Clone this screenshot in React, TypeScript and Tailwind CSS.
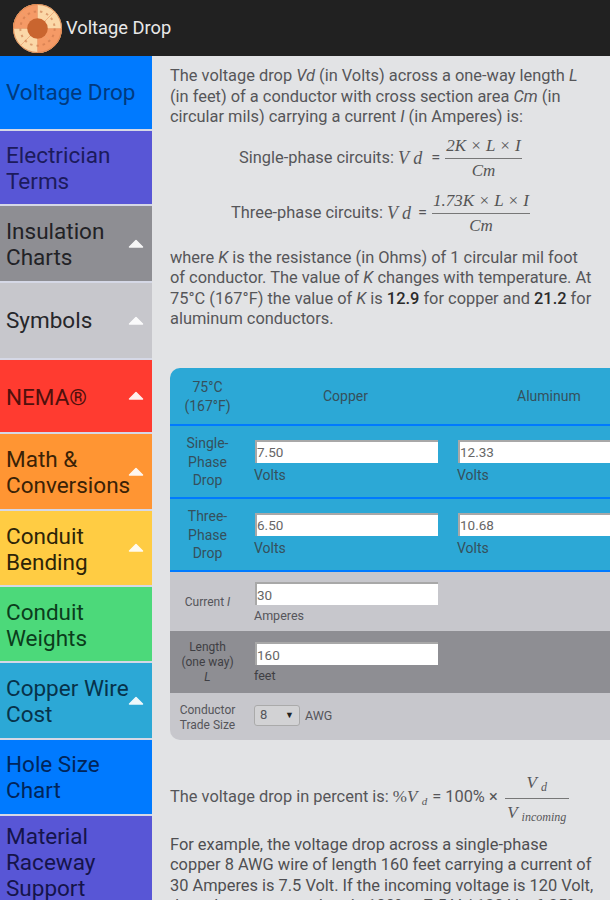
import React from "react";

const menu = [
  { label: ["Voltage Drop"], cls: "h-[73px] pb-[1px] bg-[#007aff] text-[#003a80]" },
  { label: ["Electrician", "Terms"], cls: "h-[73px] bg-[#5856d6] text-[#1c1b5c]" },
  { label: ["Insulation", "Charts"], cls: "h-[75px] bg-[#8e8e93] text-[#222226]", arrow: true },
  { label: ["Symbols"], cls: "h-[75px] pb-[1px] bg-[#c7c7cc] text-[#26262a]", arrow: true },
  { label: ["NEMA®"], cls: "h-[72px] pt-[1px] bg-[#ff3b30] text-[#50100c]", arrow: true },
  { label: ["Math &", "Conversions"], cls: "h-[75px] pt-[1px] bg-[#ff9533] text-[#3a2206]", arrow: true },
  { label: ["Conduit", "Bending"], cls: "h-[74px] pt-[1px] bg-[#ffcc43] text-[#2d2408]", arrow: true },
  { label: ["Conduit", "Weights"], cls: "h-[74px] pt-[1px] bg-[#4cd97a] text-[#0b3d1c]" },
  { label: ["Copper Wire", "Cost"], cls: "h-[75px] bg-[#2ca8d6] text-[#07324a]", arrow: true },
  { label: ["Hole Size", "Chart"], cls: "h-[74px] bg-[#007aff] text-[#00255a]" },
  { label: ["Material", "Raceway", "Support"], cls: "h-[92px] bg-[#5856d6] text-[#15144a]" },
];

function Logo() {
  const spokes = [0, 45, 90, 135, 180, 225, 270, 315];
  return (
    <svg width="49" height="49" viewBox="0 0 50 50" className="shrink-0">
      <circle cx="25" cy="25" r="25" fill="#fbd8a8" />
      <path d="M25 25V0A25 25 0 0 0 0 25Z" fill="#f59a66" />
      <path d="M25 25H50A25 25 0 0 1 25 50Z" fill="#f59a66" />
      {spokes.map((a) => (
        <line key={a} x1="25" y1="25" x2="25" y2="1" stroke="#e9a070" strokeWidth="0.7" transform={`rotate(${a} 25 25)`} />
      ))}
      <circle cx="25" cy="25" r="24.5" fill="none" stroke="#d9854f" strokeWidth="1" />
      <circle cx="25" cy="25" r="17.5" fill="none" stroke="#c9764a" strokeWidth="2" strokeDasharray="2.5 4" opacity="0.6" />
      <circle cx="25" cy="25" r="10.5" fill="#c9652f" />
    </svg>
  );
}

function Arrow() {
  return (
    <svg width="16" height="10" viewBox="0 0 16 10" className="absolute right-[8px] top-1/2 -translate-y-1/2">
      <path d="M8 1.5L14.5 8H1.5Z" fill="#ffffff" stroke="#ffffff" strokeWidth="1.5" strokeLinejoin="round" opacity="0.92" />
    </svg>
  );
}

function Frac({ top, bottom }: { top: React.ReactNode; bottom: React.ReactNode }) {
  return (
    <span className="inline-flex flex-col items-center font-['Liberation_Serif',serif] italic text-[17px] text-[#555]">
      <span className="px-[1px] border-b border-[#777] leading-[25px] whitespace-nowrap">{top}</span>
      <span className="px-[1px] leading-[24px]">{bottom}</span>
    </span>
  );
}

function Num({ value, wide }: { value: string; wide?: boolean }) {
  return (
    <input
      readOnly
      value={value}
      className={`block h-[23px] ${wide ? "w-[200px]" : "w-[183px]"} bg-white border-t-2 border-l-2 border-[#a8a8a8] text-[13.5px] text-[#666] outline-none`}
    />
  );
}

export default function App() {
  return (
    <div className="w-[610px] h-[900px] overflow-hidden bg-[#e2e3e5] font-['Roboto',sans-serif]">
      <header className="h-[56px] bg-[#212121] flex items-center pl-[13px] gap-[4px]">
        <Logo />
        <span className="text-[18.3px] text-[#e8e8e8]">Voltage Drop</span>
      </header>
      <div className="flex h-[844px] overflow-hidden">
        <nav className="w-[152px] shrink-0 flex flex-col gap-[2px] bg-[#d5d8e6]">
          {menu.map((m) => (
            <div key={m.label[0] + m.cls} className={`relative shrink-0 flex flex-col justify-center pl-[6px] text-[22.5px] leading-[26px] ${m.cls}`}>
              {m.label.map((l) => (
                <span key={l}>{l}</span>
              ))}
              {m.arrow && <Arrow />}
            </div>
          ))}
        </nav>
        <main className="flex-1 min-w-0 pl-[18px] pt-[10px] text-[16.4px] leading-[20.5px] text-[#565659] whitespace-nowrap">
          <p>
            The voltage drop <i>Vd</i> (in Volts) across a one-way length <i>L</i>
            <br />
            (in feet) of a conductor with cross section area <i>Cm</i> (in
            <br />
            circular mils) carrying a current <i>I</i> (in Amperes) is:
          </p>
          <div className="mt-[3px] flex items-center pl-[69px] h-[55px]">
            <span>Single-phase circuits:&nbsp;</span>
            <span className="font-['Liberation_Serif',serif] italic text-[18px]">V d</span>
            <span className="ml-[9px] mr-[5px]">=</span>
            <Frac top="2K × L × I" bottom="Cm" />
          </div>
          <div className="flex items-center pl-[61px] h-[55px]">
            <span>Three-phase circuits:&nbsp;</span>
            <span className="font-['Liberation_Serif',serif] italic text-[18px]">V d</span>
            <span className="ml-[7px] mr-[5px]">=</span>
            <Frac top="1.73K × L × I" bottom="Cm" />
          </div>
          <p className="mt-[7px]">
            where <i>K</i> is the resistance (in Ohms) of 1 circular mil foot
            <br />
            of conductor. The value of <i>K</i> changes with temperature. At
            <br />
            75°C (167°F) the value of <i>K</i> is <b className="font-medium text-[#2a2a2a]">12.9</b> for copper and <b className="font-medium text-[#2a2a2a]">21.2</b> for
            <br />
            aluminum conductors.
          </p>

          <div className="mt-[38px] w-[470px] rounded-l-[10px] overflow-hidden text-[#35505c] leading-[18.5px]">
            <div className="h-[58px] pt-[2px] bg-[#2ca8d6] border-b-2 border-[#007aff] flex items-center text-[14px]">
              <div className="w-[75px] shrink-0 text-center">75°C<br />(167°F)</div>
              <div className="w-[213px] shrink-0 pl-[78px]">Copper</div>
              <div className="pl-[59px]">Aluminum</div>
            </div>
            {[
              { head: ["Single-", "Phase", "Drop"], a: "7.50", b: "12.33" },
              { head: ["Three-", "Phase", "Drop"], a: "6.50", b: "10.68" },
            ].map((r) => (
              <div key={r.a} className="h-[73px] bg-[#2ca8d6] border-b-2 border-[#007aff] flex items-center">
                <div className="w-[75px] shrink-0 pt-[2px] text-center text-[14px]">
                  {r.head.map((h) => (
                    <div key={h}>{h}</div>
                  ))}
                </div>
                <div className="w-[213px] shrink-0 pl-[10px] text-[14px] leading-[16px]">
                  <Num value={r.a} />
                  <div className="-ml-[1px] mt-[4px]">Volts</div>
                </div>
                <div className="text-[14px] leading-[16px]">
                  <Num value={r.b} wide />
                  <div className="-ml-[1px] mt-[4px]">Volts</div>
                </div>
              </div>
            ))}
            <div className="h-[59px] bg-[#c7c7cc] flex items-center text-[#55555a]">
              <div className="w-[75px] shrink-0 pt-[3px] text-center text-[12px]">Current <i>I</i></div>
              <div className="pl-[10px] pt-[3px] text-[12.5px] leading-[15px]">
                <Num value="30" />
                <div className="-ml-[1px] mt-[3px]">Amperes</div>
              </div>
            </div>
            <div className="h-[62px] bg-[#8e8e93] flex items-center text-[#3f3f44]">
              <div className="w-[75px] shrink-0 pt-[2px] text-center text-[12px] leading-[15px]">
                Length<br />(one way)<br /><i>L</i>
              </div>
              <div className="pl-[10px] pt-[2px] text-[12.5px] leading-[15px]">
                <Num value="160" />
                <div className="-ml-[1px] mt-[3px]">feet</div>
              </div>
            </div>
            <div className="h-[47px] bg-[#c7c7cc] flex items-center text-[#55555a]">
              <div className="w-[75px] shrink-0 pt-[3px] text-center text-[12px] leading-[15px]">
                Conductor<br />Trade Size
              </div>
              <div className="ml-[9px] mb-[1px] w-[46px] h-[21px] rounded-[3px] border border-[#aaa] bg-[#d2d2d4] flex items-center justify-between px-[5px] text-[13px]">
                <span>8</span>
                <span className="text-[9px] text-[#222]">▼</span>
              </div>
              <span className="ml-[5px] text-[12.5px]">AWG</span>
            </div>
          </div>

          <div className="mt-[23px] flex items-center h-[70px]">
            <span>The voltage drop in percent is:&nbsp;</span>
            <span className="font-['Liberation_Serif',serif] text-[17px]">
              %<i>V</i> <sub className="text-[11px] italic">d</sub>
            </span>
            <span className="ml-[5px]">= 100% ×&nbsp;</span>
            <span className="inline-flex flex-col items-center font-['Liberation_Serif',serif] italic text-[17px] ml-[3px]">
              <span className="w-[64px] text-center border-b border-[#777] leading-[27px] pb-[2px]">
                V <sub className="text-[12px]">d</sub>
              </span>
              <span className="leading-[27px]">
                V <sub className="text-[12px]">incoming</sub>
              </span>
            </span>
          </div>
          <p className="mt-[2px] text-[#4f4f52]">
            For example, the voltage drop across a single-phase
            <br />
            copper 8 AWG wire of length 160 feet carrying a current of
            <br />
            30 Amperes is 7.5 Volt. If the incoming voltage is 120 Volt,
            <br />
            the voltage percent drop is 100% × 7.5 V / 120 V = 6.25%.
          </p>
        </main>
      </div>
    </div>
  );
}
